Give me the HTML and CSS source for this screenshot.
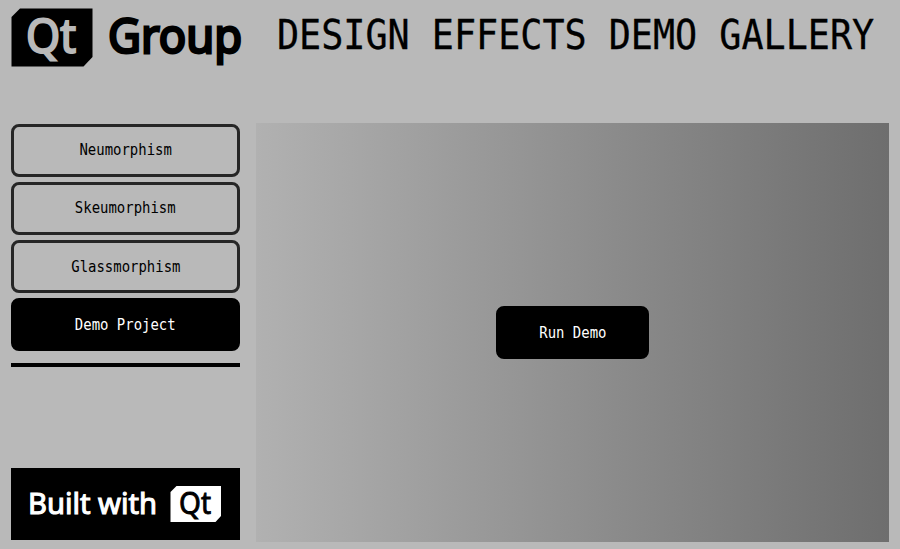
FILE: index.html
```html
<!DOCTYPE html>
<html lang="en">
<head>
<meta charset="utf-8">
<title>Design Effects Demo Gallery</title>
<link rel="stylesheet" href="styles.css">
</head>
<body>
<header class="header">
  <svg class="logo" viewBox="0 0 230 60" aria-label="Qt Group">
    <path d="M0.5 9 9 .5H81.500V49L72.500 58.500H.5Z"/>
    <text class="logo-qt" x="15" y="44.800" font-size="47.500" textLength="50" lengthAdjust="spacingAndGlyphs">Qt</text>
    <text class="logo-group" x="97" y="44.500" font-size="48" textLength="134" lengthAdjust="spacingAndGlyphs">Group</text>
  </svg>
  <h1 class="title">DESIGN EFFECTS DEMO GALLERY</h1>
</header>
<div class="content">
  <aside class="sidebar">
    <nav class="menu">
      <button class="button"><span class="label">Neumorphism</span></button>
      <button class="button"><span class="label">Skeumorphism</span></button>
      <button class="button"><span class="label">Glassmorphism</span></button>
      <button class="button filled"><span class="label">Demo Project</span></button>
    </nav>
    <div class="divider"></div>
    <svg class="built" viewBox="0 0 229 72" aria-label="Built with Qt">
      <rect width="229" height="72"/>
      <text class="built-text" x="17" y="46.300" font-size="29" textLength="129" lengthAdjust="spacingAndGlyphs">Built with</text>
      <path class="built-badge" d="M159.500 24 165.500 18H210V48L204.500 54H159.500Z"/>
      <text class="built-qt" x="168" y="46" font-size="30" textLength="32" lengthAdjust="spacingAndGlyphs">Qt</text>
    </svg>
  </aside>
  <main class="stage">
    <button class="button filled run"><span class="label">Run Demo</span></button>
  </main>
</div>
</body>
</html>
```

FILE: styles.css
```css
* { box-sizing: border-box; }

body {
  margin: 0;
  height: 549px;
  overflow: hidden;
  background: #b9b9b9;
  color: #000;
  font-family: "DejaVu Sans Mono", monospace;
}

.header {
  display: flex;
  height: 123px;
  padding: 8px 11px 0;
}

.logo {
  flex: none;
  width: 230px;
  height: 60px;
  overflow: visible;
  font-family: "Noto Sans", sans-serif;
}

.logo-qt { fill: #b9b9b9; stroke: #b9b9b9; stroke-width: 2.1px; }
.logo-group { stroke: #000; stroke-width: 2.8px; }

.title {
  margin: 3px 0 0 35.5px;
  font-size: 40.5px;
  font-weight: 400;
  line-height: 48px;
  white-space: nowrap;
  transform: scaleX(.907);
  transform-origin: left;
  -webkit-text-stroke: .3px #000;
}

.content {
  display: flex;
  gap: 16px;
  height: 419px;
  padding: 0 11px;
}

.sidebar {
  display: flex;
  flex: none;
  flex-direction: column;
  width: 229px;
}

.menu {
  display: flex;
  flex-direction: column;
  gap: 5.2px;
  padding-top: .8px;
}

.button {
  display: flex;
  align-items: center;
  justify-content: center;
  width: 229px;
  height: 53px;
  padding: 0;
  border: 3px solid #262626;
  border-radius: 8px;
  background: transparent;
  color: #000;
  font: 15.3px/20px "DejaVu Sans Mono", monospace;
}

.filled {
  border-color: #000;
  background: #000;
  color: #fff;
}

.label {
  white-space: pre;
  transform: scaleX(.912);
}

.divider {
  height: 4px;
  margin-top: 11.6px;
  background: #000;
}

.built {
  width: 229px;
  height: 72px;
  margin-top: auto;
  margin-bottom: 2px;
  font-family: "Noto Sans", sans-serif;
}

.built-text { fill: #fff; stroke: #fff; stroke-width: 1.1px; }
.built-badge { fill: #fff; }
.built-qt { stroke: #000; stroke-width: .9px; }

.stage {
  display: flex;
  flex: none;
  align-items: center;
  justify-content: center;
  width: 633px;
  background: linear-gradient(to right, #b1b1b1, #6e6e6e);
}

.run { width: 153px; }
```
